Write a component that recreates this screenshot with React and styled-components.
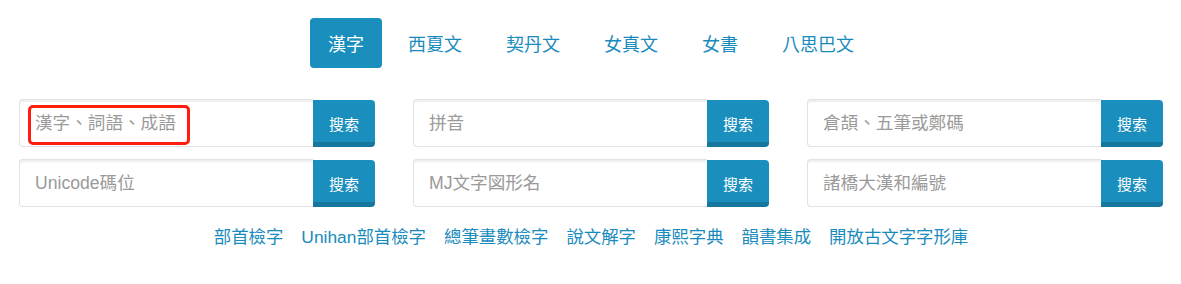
import styled, { createGlobalStyle } from "styled-components";

const GlobalStyle = createGlobalStyle`
  body {
    margin: 0;
    background: #ffffff;
    font-family: "Liberation Sans", "Noto Sans CJK TC", sans-serif;
  }
`;

const Page = styled.div`
  padding: 18px 18px 0 19px;
`;

const Tabs = styled.nav`
  display: flex;
  justify-content: center;
  gap: 8px;
  margin-bottom: 31px;
`;

const Tab = styled.a`
  display: flex;
  align-items: center;
  height: 50px;
  padding: 0 18px;
  border-radius: 4px;
  font-size: 18px;
  text-decoration: none;
  cursor: pointer;
  color: ${(props) => (props.active ? "#ffffff" : "#1a8bbd")};
  background-color: ${(props) => (props.active ? "#1a8ebd" : "transparent")};
`;

const SearchGrid = styled.div`
  display: grid;
  grid-template-columns: repeat(3, 1fr);
  column-gap: 38px;
  row-gap: 12px;
`;

const Field = styled.div`
  position: relative;
  display: flex;
  height: 48px;
`;

const Input = styled.input`
  flex: 1;
  min-width: 0;
  box-sizing: border-box;
  height: 48px;
  padding: 0 15px;
  border: 1px solid #e2e2e2;
  border-right: none;
  border-radius: 4px 0 0 4px;
  box-shadow: inset 0 3px 2px -1px rgba(0, 0, 0, 0.07);
  font-family: "Liberation Sans", "Noto Sans CJK TC", sans-serif;
  font-size: 17.6px;
  color: #555;
  outline: none;

  &::placeholder {
    color: #9a9a9a;
  }
`;

const Button = styled.button`
  width: 62px;
  height: 47px;
  margin-top: 1px;
  box-sizing: border-box;
  border: none;
  border-bottom: 5px solid #15779e;
  border-radius: 0 4px 4px 0;
  background-color: #1a8ebd;
  color: #ffffff;
  font-family: "Liberation Sans", "Noto Sans CJK TC", sans-serif;
  font-size: 15px;
  padding: 4px 0 0;
  cursor: pointer;
`;

const Highlight = styled.div`
  position: absolute;
  left: 9px;
  top: 6px;
  width: 162px;
  height: 40px;
  box-sizing: border-box;
  border: 3.5px solid #ff1d0d;
  border-radius: 5px;
  pointer-events: none;
`;

const Links = styled.div`
  display: flex;
  justify-content: center;
  gap: 18px;
  margin-top: 18px;
  line-height: 24px;
`;

const LinkItem = styled.a`
  font-size: 17.4px;
  color: #1a8bbd;
  text-decoration: none;
  cursor: pointer;
`;

const tabs = ["漢字", "西夏文", "契丹文", "女真文", "女書", "八思巴文"];

const searches = [
  "漢字、詞語、成語",
  "拼音",
  "倉頡、五筆或鄭碼",
  "Unicode碼位",
  "MJ文字図形名",
  "諸橋大漢和編號",
];

const links = [
  "部首檢字",
  "Unihan部首檢字",
  "總筆畫數檢字",
  "說文解字",
  "康熙字典",
  "韻書集成",
  "開放古文字字形庫",
];

export default function App() {
  return (
    <Page>
      <GlobalStyle />
      <Tabs>
        {tabs.map((tab, i) => (
          <Tab key={tab} active={i === 0 ? 1 : 0}>
            {tab}
          </Tab>
        ))}
      </Tabs>
      <SearchGrid>
        {searches.map((placeholder, i) => (
          <Field key={placeholder}>
            <Input placeholder={placeholder} />
            <Button>搜索</Button>
            {i === 0 && <Highlight />}
          </Field>
        ))}
      </SearchGrid>
      <Links>
        {links.map((link) => (
          <LinkItem key={link}>{link}</LinkItem>
        ))}
      </Links>
    </Page>
  );
}
